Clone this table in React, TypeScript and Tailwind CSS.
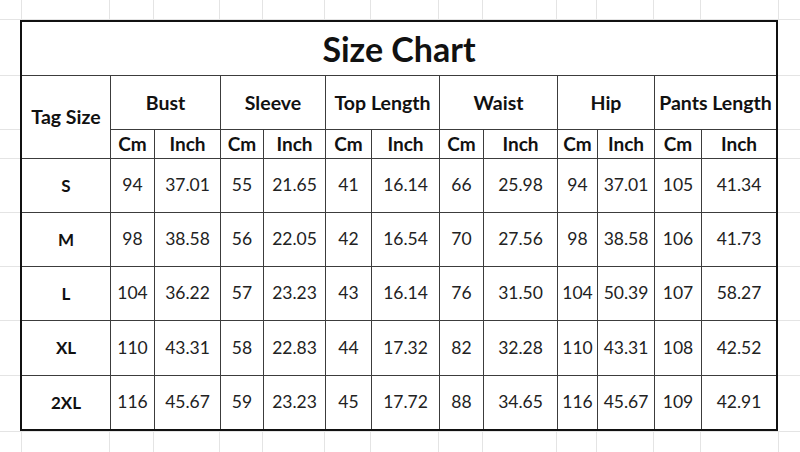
import React from "react";

const gridWidths = [22, 88, 44, 66, 43, 62, 46, 68, 44, 74, 40, 57, 47, 78];

const rows: string[][] = [
  ["S", "94", "37.01", "55", "21.65", "41", "16.14", "66", "25.98", "94", "37.01", "105", "41.34"],
  ["M", "98", "38.58", "56", "22.05", "42", "16.54", "70", "27.56", "98", "38.58", "106", "41.73"],
  ["L", "104", "36.22", "57", "23.23", "43", "16.14", "76", "31.50", "104", "50.39", "107", "58.27"],
  ["XL", "110", "43.31", "58", "22.83", "44", "17.32", "82", "32.28", "110", "43.31", "108", "42.52"],
  ["2XL", "116", "45.67", "59", "23.23", "45", "17.72", "88", "34.65", "116", "45.67", "109", "42.91"],
];

const groups = ["Bust", "Sleeve", "Top Length", "Waist", "Hip", "Pants Length"];

function GridStripRow({ top }: { top?: boolean }) {
  return (
    <div className={`flex flex-1 ${top ? "border-b border-[#e4e4e4]" : "border-t border-[#e4e4e4]"}`}>
      {gridWidths.map((w, i) => (
        <div key={i} className="h-full shrink-0 border-r border-[#e4e4e4]" style={{ width: w }} />
      ))}
      <div className="h-full flex-1" />
    </div>
  );
}

function SideStrip({ right }: { right?: boolean }) {
  const hs = [56, 54, 29, 54, 54, 54, 55];
  return (
    <div className={`flex flex-col ${right ? "flex-1" : "w-[20px] shrink-0"}`}>
      {hs.map((h, i) => (
        <div key={i} className="shrink-0 border-b border-[#e4e4e4]" style={{ height: h }} />
      ))}
      <div className="flex-1" />
    </div>
  );
}

export default function App() {
  const cell = "bg-white flex items-center justify-center";
  return (
    <div
      className="w-[800px] h-[452px] bg-white flex flex-col overflow-hidden text-[#111]"
      style={{ fontFamily: "Lato, 'Open Sans', sans-serif" }}
    >
      <div className="h-[20px] flex">
        <GridStripRow top />
      </div>
      <div className="flex h-[411px]">
        <SideStrip />
        <div className="w-[758px] h-[411px] shrink-0 border-2 border-[#111]">
          <div className="grid h-full w-full gap-px bg-[#3c3c3c] grid-cols-[88px_43px_65px_42px_61px_45px_67px_43px_73px_39px_56px_46px_74px] grid-rows-[53px_53px_28px_53px_53px_53px_54px_53px]">
            <div className={`${cell} col-span-13 text-[34px] font-bold`}>Size Chart</div>
            <div className={`${cell} row-span-2 text-[19.5px] font-bold`}>Tag Size</div>
            {groups.map((g) => (
              <div key={g} className={`${cell} col-span-2 text-[19.5px] font-bold whitespace-nowrap`}>
                {g}
              </div>
            ))}
            {groups.map((g) => (
              <React.Fragment key={g + "u"}>
                <div className={`${cell} text-[19px] font-bold`}>Cm</div>
                <div className={`${cell} text-[19px] font-bold`}>Inch</div>
              </React.Fragment>
            ))}
            {rows.map((r) =>
              r.map((v, i) => (
                <div
                  key={r[0] + i}
                  className={`${cell} ${i === 0 ? "text-[17px] font-bold" : "text-[17.5px] text-[#222]"}`}
                >
                  {v}
                </div>
              ))
            )}
          </div>
        </div>
        <SideStrip right />
      </div>
      <div className="flex flex-1">
        <GridStripRow />
      </div>
    </div>
  );
}
